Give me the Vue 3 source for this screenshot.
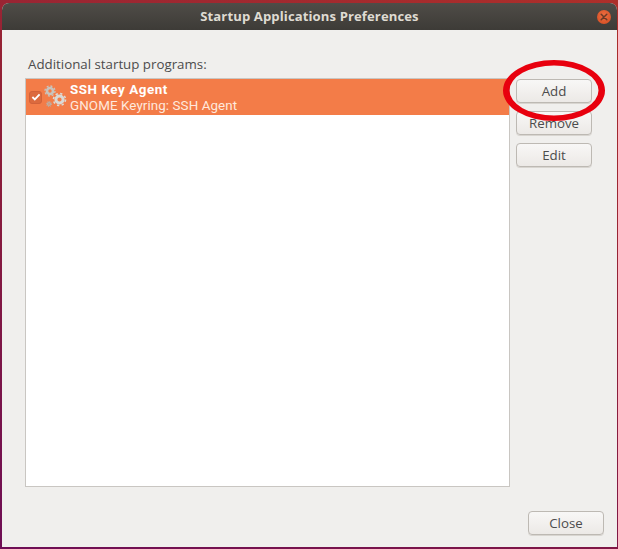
<script setup>
const buttons = ['Add', 'Remove', 'Edit']
</script>

<template>
  <div class="desktop">
    <div class="window">
      <header class="titlebar">
        <span class="title">Startup Applications Preferences</span>
        <span class="close-dot">
          <svg width="8" height="8" viewBox="0 0 8 8"><path d="M1.200 1.200l5.600 5.600M6.800 1.200L1.200 6.800" stroke="#6b3a26" stroke-width="1.5" stroke-linecap="round"/></svg>
        </span>
      </header>
      <main class="content">
        <div class="label">Additional startup programs:</div>
        <div class="main-row">
          <div class="list">
            <div class="row">
              <span class="check">
                <svg width="10" height="10" viewBox="0 0 10 10"><path d="M1.400 5l2.400 2.400 4.800-5" fill="none" stroke="#fff" stroke-width="1.8"/></svg>
              </span>
              <svg class="gears" width="26" height="26" viewBox="0 0 26 26">
                <g fill="none">
                  <circle cx="7" cy="7" r="3" stroke-width="2.6" stroke="#c8c4be"/>
                  <circle cx="7" cy="7" r="5" stroke-width="1.3" stroke-dasharray="2 1.9" stroke="#c8c4be"/>
                  <circle cx="16.5" cy="15.5" r="3.6" stroke-width="3" stroke="#dbd9d5"/>
                  <circle cx="16.5" cy="15.5" r="6" stroke-width="1.6" stroke-dasharray="2.3 2.4" stroke="#dbd9d5"/>
                  <circle cx="6" cy="20" r="1.4" stroke-width="1.4" stroke="#b8b2aa"/>
                  <circle cx="6" cy="20" r="2.6" stroke-width="1" stroke-dasharray="1 1.05" stroke="#b8b2aa"/>
                </g>
              </svg>
              <div class="row-text">
                <div class="row-name">SSH Key Agent</div>
                <div class="row-desc">GNOME Keyring: SSH Agent</div>
              </div>
            </div>
          </div>
          <div class="side">
            <button v-for="b in buttons" :key="b" class="btn">{{ b }}</button>
          </div>
        </div>
        <div class="footer">
          <button class="btn close-btn">Close</button>
        </div>
      </main>
    </div>
    <svg class="ring" width="138" height="100" viewBox="0 0 138 100">
      <path fill="#e8000e" fill-rule="evenodd" d="M23 50.500a51 30.500 0 1 0 102 0a51 30.500 0 1 0 -102 0zM29.500 50.500a44.500 25 0 1 1 89 0a44.500 25 0 1 1 -89 0z"/>
    </svg>
  </div>
</template>

<style>
html, body { margin: 0; padding: 0; overflow: hidden; }
</style>

<style scoped>
.desktop {
  position: relative;
  width: 618px;
  height: 549px;
  box-sizing: border-box;
  padding: 3px 1px 2px 2px;
  overflow: hidden;
  background: linear-gradient(200deg, #ad2f2a 0%, #8f1f38 45%, #6e0e55 100%);
  font-family: "Open Sans", "Noto Sans", sans-serif;
}
.window {
  height: 100%;
  display: flex;
  flex-direction: column;
  background: #f0efed;
  border-radius: 7px 7px 0 0;
  overflow: hidden;
}
.titlebar {
  position: relative;
  flex: 0 0 27px;
  display: flex;
  align-items: center;
  justify-content: center;
  background: linear-gradient(#4f4c47, #3d3b37);
}
.title {
  color: #dfdbd2;
  font-size: 13.1px;
  font-weight: 700;
  letter-spacing: 0.1px;
  position: relative;
  top: -1px;
}
.close-dot {
  position: absolute;
  right: 6px;
  top: 7px;
  width: 14px;
  height: 14px;
  border-radius: 50%;
  background: radial-gradient(circle at 50% 40%, #ee6f42, #d2491e);
  display: flex;
  align-items: center;
  justify-content: center;
}
.content {
  flex: 1;
  min-height: 0;
  display: flex;
  flex-direction: column;
  padding: 25px 13px 12px 23px;
}
.label {
  font-size: 13.3px;
  line-height: 18px;
  color: #4c4c4c;
  margin: 0 0 5px 3px;
}
.main-row {
  flex: 1;
  min-height: 0;
  display: flex;
  gap: 6px;
}
.list {
  width: 485px;
  box-sizing: border-box;
  background: #fff;
  border: 1px solid #c9c6c2;
}
.row {
  height: 36px;
  display: flex;
  align-items: center;
  background: #f37c48;
  color: #fff;
}
.check {
  flex: none;
  width: 13px;
  height: 13px;
  box-sizing: border-box;
  margin-left: 3px;
  border: 1px solid #d2623a;
  border-radius: 3px;
  background: #dc6a3e;
  display: flex;
  align-items: center;
  justify-content: center;
}
.gears { margin-left: 1px; flex: none; }
.row-text {
  margin-left: 1px;
  padding-top: 1px;
  font-family: Roboto, "Open Sans", sans-serif;
}
.row-name {
  font-size: 13.4px;
  font-weight: 700;
  line-height: 16px;
  letter-spacing: 0.55px;
}
.row-desc {
  font-size: 13.4px;
  line-height: 16px;
  letter-spacing: 0.08px;
  color: #ffe9dd;
}
.side {
  display: flex;
  flex-direction: column;
  gap: 8px;
  padding-top: 1px;
}
.btn {
  flex: none;
  width: 76px;
  height: 24px;
  padding: 0;
  box-sizing: border-box;
  border: 1px solid #bdb9b3;
  border-radius: 4px;
  background: linear-gradient(#f8f7f6, #ece9e6);
  box-shadow: 0 1px 0 #d8d5d0;
  color: #4c4c4c;
  font-family: inherit;
  font-size: 13.3px;
}
.footer {
  display: flex;
  justify-content: flex-end;
  padding-top: 24px;
}
.ring {
  position: absolute;
  left: 480px;
  top: 40px;
  filter: blur(0.5px);
}
</style>
